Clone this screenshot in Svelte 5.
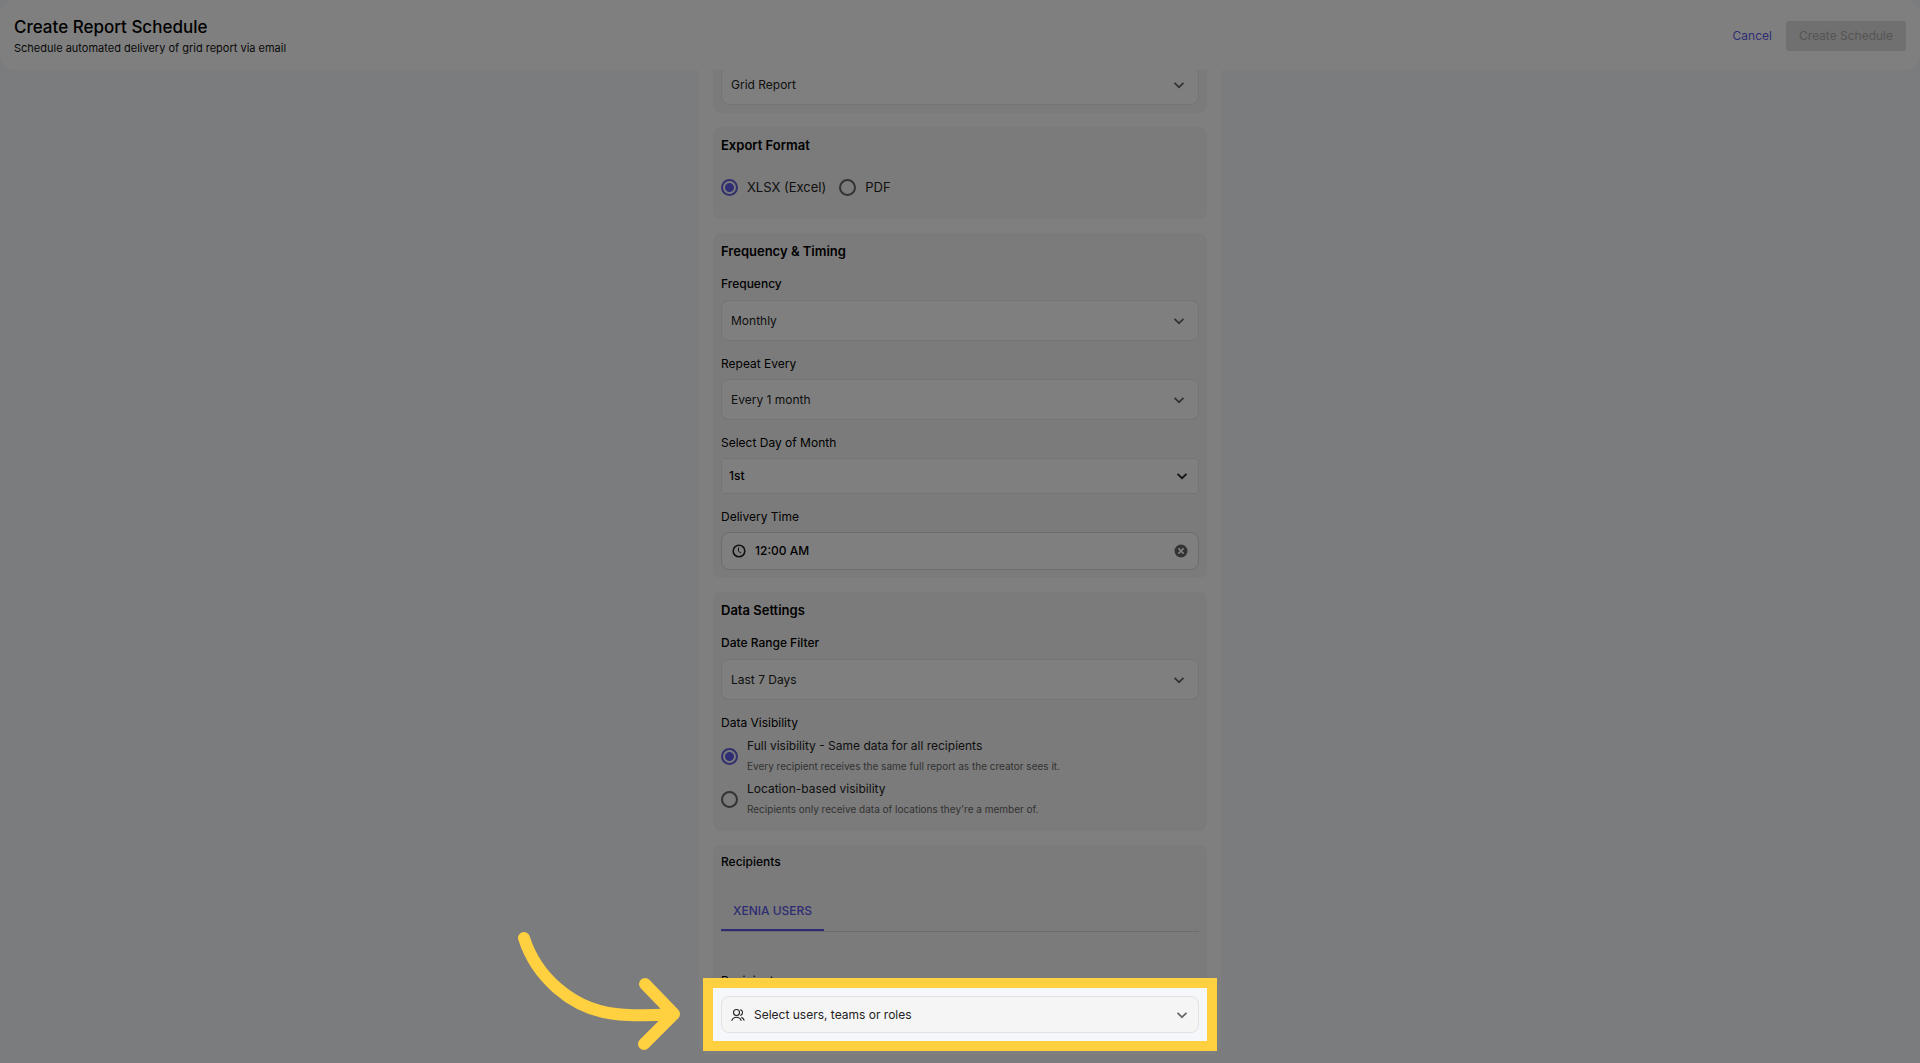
<script>
  let format = $state('xlsx');
  let visibility = $state('full');
  let time = $state('12:00 AM');
</script>

{#snippet chevron()}
  <svg class="chevron" viewBox="0 0 12 12" aria-hidden="true"><path d="M1.500 3.800 6 8.200l4.500-4.400" /></svg>
{/snippet}

<div class="page">
  <header>
    <div>
      <h1>Create Report Schedule</h1>
      <p>Schedule automated delivery of grid report via email</p>
    </div>
    <div class="actions">
      <button class="link" type="button">Cancel</button>
      <button class="primary" type="button" disabled>Create Schedule</button>
    </div>
  </header>

  <main>
    <form class="panel">
      <section>
        <div class="select">
          <select aria-label="Report type"><option>Grid Report</option></select>
          {@render chevron()}
        </div>
      </section>

      <section class="format">
        <h2>Export Format</h2>
        <div class="radios">
          <label><input type="radio" name="format" value="xlsx" bind:group={format} />XLSX (Excel)</label>
          <label><input type="radio" name="format" value="pdf" bind:group={format} />PDF</label>
        </div>
      </section>

      <section>
        <h2>Frequency &amp; Timing</h2>
        <label class="label strong" for="frequency">Frequency</label>
        <div class="select">
          <select id="frequency"><option>Monthly</option></select>
          {@render chevron()}
        </div>
        <label class="label next" for="repeat">Repeat Every</label>
        <div class="select">
          <select id="repeat"><option>Every 1 month</option></select>
          {@render chevron()}
        </div>
        <label class="label next" for="day">Select Day of Month</label>
        <div class="select compact">
          <select id="day"><option>1st</option></select>
          {@render chevron()}
        </div>
        <label class="label next" for="time">Delivery Time</label>
        <div class="time">
          <svg viewBox="0 0 14 14" aria-hidden="true"><circle cx="7" cy="7" r="5.800" /><path d="M6.500 3.500V7.300l2.500 1.700" /></svg>
          <input id="time" type="text" bind:value={time} />
          <button type="button" aria-label="Clear time" onclick={() => (time = '')}>
            <svg viewBox="0 0 14 14" aria-hidden="true"><circle cx="7" cy="7" r="6.500" /><path d="m4.400 4.400 5.200 5.200m0-5.200-5.200 5.200" /></svg>
          </button>
        </div>
      </section>

      <section class="data">
        <h2>Data Settings</h2>
        <label class="label strong" for="range">Date Range Filter</label>
        <div class="select">
          <select id="range"><option>Last 7 Days</option></select>
          {@render chevron()}
        </div>
        <div class="label next group" id="visibility-label">Data Visibility</div>
        <div class="options" role="radiogroup" aria-labelledby="visibility-label">
          <label>
            <input type="radio" name="visibility" value="full" bind:group={visibility} />
            <span>Full visibility - Same data for all recipients<small>Every recipient receives the same full report as the creator sees it.</small></span>
          </label>
          <label>
            <input type="radio" name="visibility" value="location" bind:group={visibility} />
            <span>Location-based visibility<small>Recipients only receive data of locations they're a member of.</small></span>
          </label>
        </div>
      </section>

      <section>
        <h3>Recipients</h3>
        <div class="tabs" role="tablist">
          <button type="button" role="tab" aria-selected="true">XENIA USERS</button>
        </div>
        <label class="label recipients-label" for="recipients">Recipients</label>
        <div class="picker">
          <button id="recipients" type="button">
            <svg class="users" viewBox="0 0 14 14" aria-hidden="true">
              <circle cx="5.500" cy="4.500" r="3" /><path d="M.7 12.700C1.600 10.500 3.300 9.300 5.500 9.300s3.900 1.200 4.800 3.400M9.300 1.600a3 3 0 0 1 0 5.800M10.300 9.400c1.400.4 2.500 1.600 3 3.300" />
            </svg>
            <span>Select users, teams or roles</span>
            {@render chevron()}
          </button>
        </div>
      </section>
    </form>
  </main>

  <div class="spotlight">
    <svg class="arrow" viewBox="0 0 166 122" aria-hidden="true">
      <path d="M8 8C18 40 52 84 112 85q20 1 44-1M129 54l29 30-30 30" />
    </svg>
  </div>
</div>

<style>
  :global(body) { margin: 0; }
  .page {
    position: relative;
    display: flex;
    flex-direction: column;
    height: 100vh;
    overflow: hidden;
    background: #f6f8fc;
    color: #000;
    font-family: Inter, 'Open Sans', sans-serif;
    font-size: 12px;
    line-height: 16px;
  }
  header {
    flex: none;
    display: flex;
    justify-content: space-between;
    align-items: center;
    padding: 15px 14px 13px;
    background: #fff;
    border-radius: 16px;
  }
  h1, h2, h3, p { margin: 0; }
  h1 { font-size: 17px; line-height: 24px; font-weight: 500; }
  header p { font-size: 11px; line-height: 18px; color: #111; }
  .actions { display: flex; align-items: center; gap: 14px; }
  button { font: inherit; border: 0; background: none; padding: 0; }
  .link { color: #5e5ae8; }
  .primary { height: 30px; padding: 0 13px; border-radius: 3px; background: #e0e0e0; color: #aaa; }
  main {
    flex: 1;
    min-height: 0;
    overflow: hidden;
    display: flex;
    flex-direction: column;
    justify-content: flex-end;
    align-items: center;
    padding-bottom: 8px;
  }
  .panel {
    display: flex;
    flex-direction: column;
    gap: 14px;
    width: 522px;
    max-width: 100%;
    box-sizing: border-box;
    padding: 14px;
    background: #fff;
    border-radius: 14px;
  }
  section { display: flex; flex-direction: column; padding: 8px; background: #f6f6f6; border-radius: 8px; }
  .format { padding-bottom: 22px; }
  .data { padding-bottom: 12px; }
  h2 { font-size: 13px; line-height: 20px; font-weight: 600; }
  h3 { font-size: 12px; line-height: 18px; font-weight: 500; }
  .label { display: block; line-height: 16px; margin-bottom: 7px; }
  .strong { font-weight: 500; margin-top: 15px; margin-bottom: 8px; }
  .next { margin-top: 15px; }
  .group { margin-bottom: 5px; }
  .select { display: grid; align-items: center; }
  .select > :global(*) { grid-area: 1 / 1; }
  select {
    appearance: none;
    box-sizing: border-box;
    width: 100%;
    height: 41px;
    padding: 0 32px 0 9px;
    border: 1px solid #e8e8e8;
    border-radius: 8px;
    background: #fff;
    color: #222;
    font: inherit;
  }
  .chevron { width: 12px; height: 12px; fill: none; stroke: #666; stroke-width: 1.7; }
  .select .chevron { justify-self: end; margin-right: 14px; pointer-events: none; }
  .compact select { height: 36px; padding-left: 7px; border-radius: 4px; font-weight: 500; color: #000; }
  .compact .chevron { margin-right: 11px; stroke: #222; }
  .time {
    display: flex;
    align-items: center;
    gap: 9px;
    box-sizing: border-box;
    height: 38px;
    padding: 0 10px;
    border: 1px solid #d8d8d8;
    border-radius: 8px;
    background: #fff;
  }
  .time svg { display: block; width: 14px; height: 14px; fill: none; stroke: #222; stroke-width: 1.6; }
  .time > svg path { stroke-width: 1; }
  .time button svg { fill: #666; stroke: none; }
  .time button path { stroke: #fff; stroke-width: 1.6; }
  .time input { flex: 1; min-width: 0; border: 0; padding: 0; background: none; font: inherit; font-weight: 500; color: #000; }
  input[type='radio'] {
    appearance: none;
    flex: none;
    box-sizing: border-box;
    width: 17px;
    height: 17px;
    margin: 0;
    border: 2px solid #666;
    border-radius: 50%;
  }
  input[type='radio']:checked { border-color: #6461d8; background: radial-gradient(circle, #5e5ae8 4px, transparent 5px); }
  .radios { display: flex; gap: 13px; margin-top: 22px; }
  .radios label, .options label { display: flex; align-items: center; gap: 9px; color: #222; }
  .radios label { font-size: 13px; line-height: 20px; }
  .options { display: flex; flex-direction: column; gap: 3px; }
  .options small { display: block; font-size: 10px; line-height: 20px; color: #666; }
  .options span { line-height: 20px; }
  .tabs { display: flex; margin-top: 22px; border-bottom: 1px solid #d8d8d8; }
  .tabs button { height: 38px; padding: 0 12px; border-bottom: 2px solid #5a56e8; color: #5e5ae8; font-weight: 500; }
  .recipients-label { margin: 41px 0 -1px; }
  .picker { margin: 0 -8px -8px; padding: 8px; background: #f6f7fa; }
  .picker button {
    display: flex;
    align-items: center;
    gap: 9px;
    box-sizing: border-box;
    width: 100%;
    height: 37px;
    padding: 0 10px 0 9px;
    border: 1px solid #e2e2e2;
    border-radius: 8px;
    background: #f5f5f5;
    text-align: left;
    color: #222;
  }
  .picker span { flex: 1; }
  .users { width: 14px; height: 14px; fill: none; stroke: #222; stroke-width: 1.1; }
  .spotlight {
    position: absolute;
    left: 50%;
    bottom: 12px;
    transform: translateX(-50%);
    box-sizing: border-box;
    width: 514px;
    height: 73px;
    border: 10px solid #ffd040;
    box-shadow: 0 0 0 3000px rgba(0, 0, 0, 0.5);
    pointer-events: none;
  }
  .arrow { position: absolute; right: 525px; bottom: -11px; width: 166px; height: 122px; fill: none; stroke: #ffd040; stroke-width: 12; stroke-linecap: round; stroke-linejoin: round; }
</style>
